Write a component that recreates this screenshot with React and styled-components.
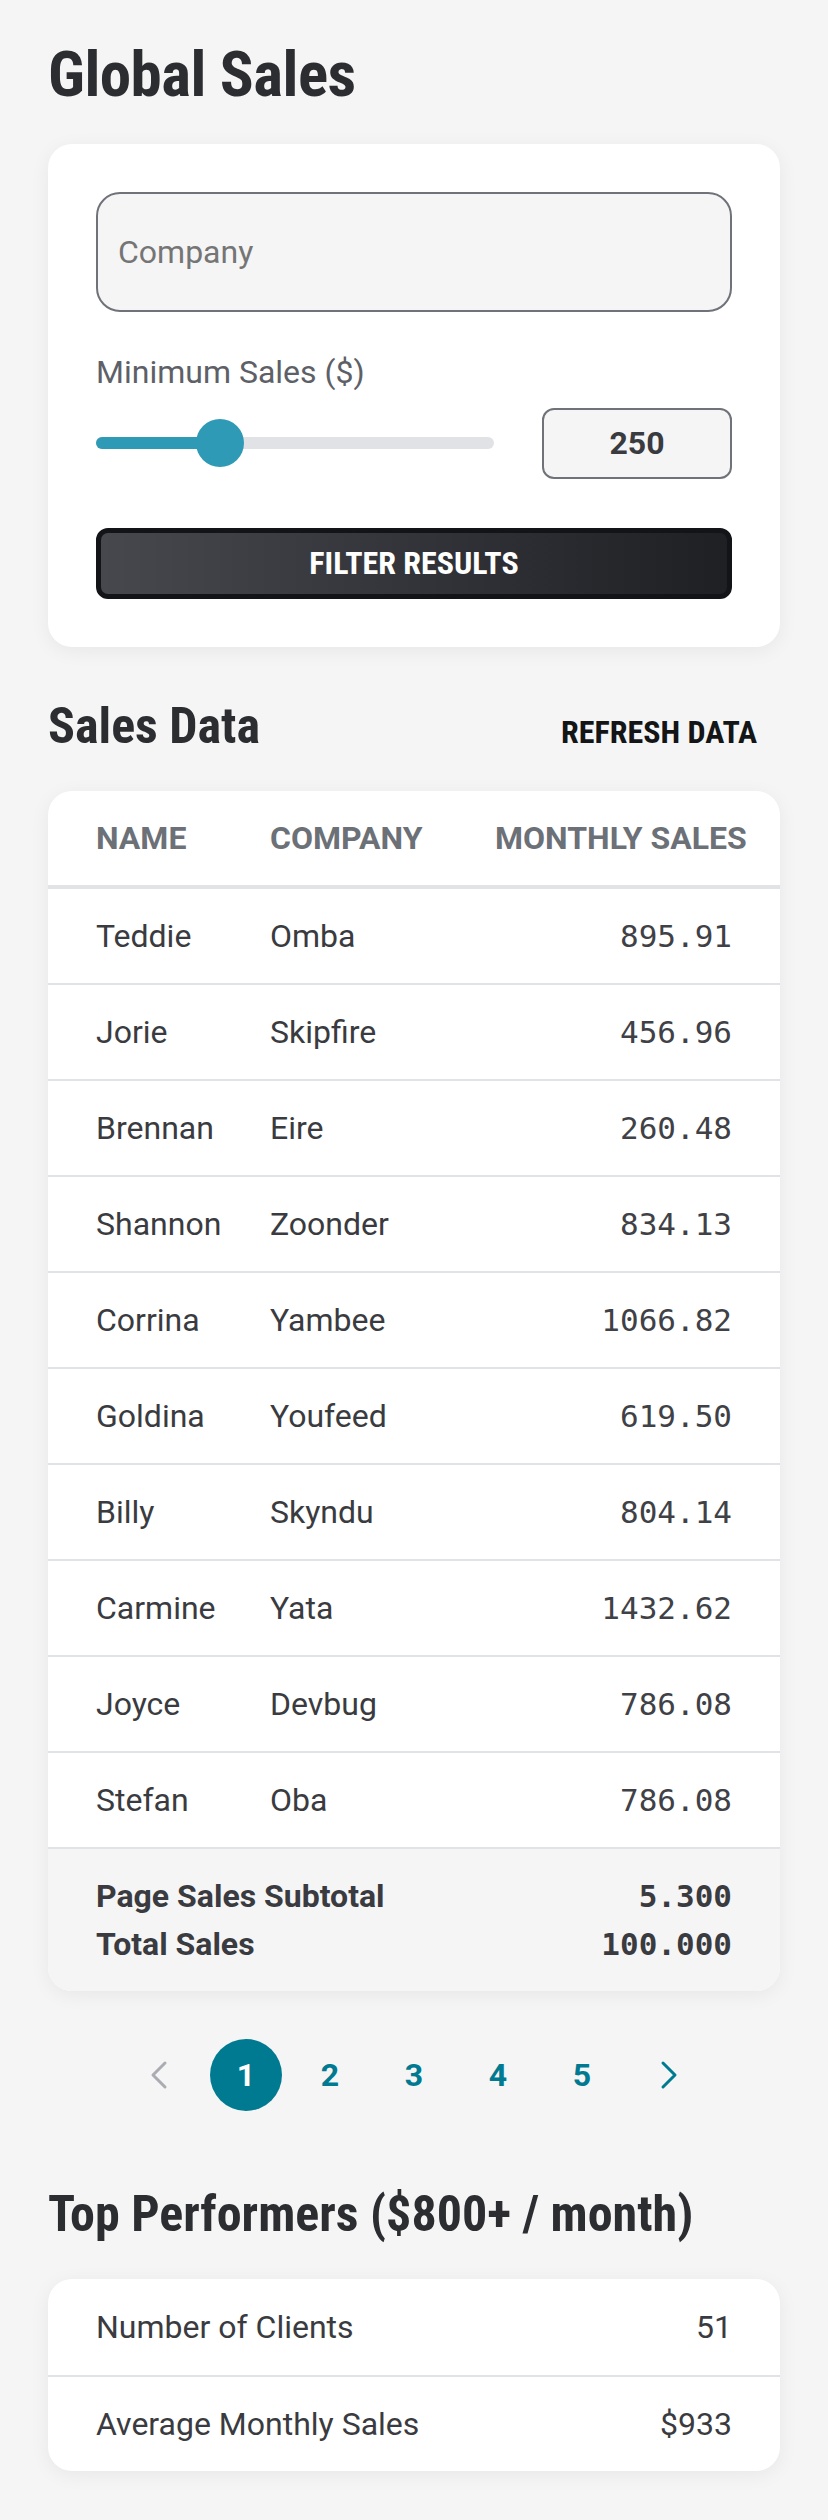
import React from 'react'
import styled, { createGlobalStyle } from 'styled-components'
import { ChevronLeft, ChevronRight } from 'lucide-react'

const GlobalStyle = createGlobalStyle`
  body {
    margin: 0;
    background: #f5f5f5;
    font-family: 'Roboto', 'Liberation Sans', sans-serif;
  }
  * { box-sizing: border-box; }
`

const condensed = `'Roboto Condensed', 'DejaVu Sans Condensed', 'Roboto', sans-serif`
const mono = `'DejaVu Sans Mono', 'Liberation Mono', monospace`

const Page = styled.div`
  padding: 37px 48px 48px;
  display: flex;
  flex-direction: column;
`

const Title = styled.h1`
  margin: 0 0 30px;
  font-family: ${condensed};
  font-weight: 700;
  font-size: 63px;
  line-height: 76.8px;
  letter-spacing: -0.5px;
  color: #2c2d31;
`

const Card = styled.div`
  background: #ffffff;
  border-radius: 24px;
  box-shadow: 0 4px 20px rgba(0, 0, 0, 0.06);
  overflow: hidden;
`

const FilterCard = styled(Card)`
  padding: 48px;
  display: flex;
  flex-direction: column;
`

const TextInput = styled.input`
  height: 120px;
  width: 100%;
  border: 2px solid #6f7278;
  border-radius: 24px;
  background: #f5f5f5;
  padding: 0 20px;
  font-family: 'Roboto', sans-serif;
  font-size: 32px;
  color: #3a3b40;
  outline: none;
  ::placeholder {
    color: #5d6067;
  }
`

const Label = styled.label`
  margin-top: 39px;
  font-size: 32px;
  line-height: 42px;
  color: #5d6067;
`

const SliderRow = styled.div`
  margin-top: 15px;
  display: flex;
  align-items: center;
  gap: 48px;
`

const Track = styled.div`
  position: relative;
  flex: 1;
  height: 12px;
  border-radius: 6px;
  background: #e1e2e6;
`

const Fill = styled.div`
  position: absolute;
  left: 0;
  top: 0;
  bottom: 0;
  border-radius: 6px;
  background: #2f9ab5;
`

const Thumb = styled.div`
  position: absolute;
  top: 50%;
  width: 48px;
  height: 48px;
  border-radius: 50%;
  background: #2f9ab5;
  transform: translate(-50%, -50%);
`

const NumberBox = styled.div`
  width: 190px;
  height: 71px;
  border: 2px solid #6f7278;
  border-radius: 12px;
  background: #f5f5f5;
  display: flex;
  align-items: center;
  justify-content: center;
  font-weight: 700;
  font-size: 32px;
  color: #3a3b40;
`

const FilterButton = styled.button`
  margin-top: 49px;
  height: 71px;
  border: 5px solid #131417;
  border-radius: 12px;
  background: linear-gradient(90deg, #47484e, #1f2024);
  color: #ffffff;
  font-family: ${condensed};
  font-weight: 700;
  font-size: 32px;
  cursor: pointer;
`

const SectionHead = styled.div`
  margin-top: 51px;
  display: flex;
  justify-content: space-between;
  align-items: baseline;
`

const SectionTitle = styled.h2`
  margin: 0;
  font-family: ${condensed};
  font-weight: 700;
  font-size: 50px;
  line-height: 57.6px;
  color: #2c2d31;
`

const RefreshButton = styled.button`
  background: none;
  border: none;
  padding: 0 23px 0 0;
  font-family: ${condensed};
  font-weight: 700;
  font-size: 32px;
  color: #141517;
  cursor: pointer;
`

const TableCard = styled(Card)`
  margin-top: 36px;
`

const Row = styled.div`
  display: grid;
  grid-template-columns: 174px 225px 1fr;
  align-items: center;
  padding: 0 24px;
  height: ${p => (p.head ? '98px' : '96px')};
  border-bottom: ${p => (p.head ? '4px' : '2px')} solid #e2e3e7;
`

const HeadCell = styled.div`
  padding: 0 24px;
  font-weight: 700;
  font-size: 32px;
  color: #6c7077;
  white-space: nowrap;
`

const Cell = styled.div`
  padding: 0 24px;
  font-size: 32px;
  color: #3a3b40;
`

const NumCell = styled(Cell)`
  text-align: right;
  font-family: ${mono};
  font-size: 31px;
  color: #404146;
`

const Footer = styled.div`
  background: #f5f5f5;
  padding: 23px 48px;
  display: grid;
  grid-template-columns: 1fr auto;
  line-height: 48px;
  color: #3a3b40;
`

const FootLabel = styled.div`
  font-weight: 700;
  font-size: 32px;
`

const FootValue = styled.div`
  text-align: right;
  font-family: ${mono};
  font-weight: 700;
  font-size: 31px;
`

const Pagination = styled.div`
  margin-top: 48px;
  display: flex;
  justify-content: center;
  gap: 12px;
`

const PageItem = styled.button`
  width: 72px;
  height: 72px;
  margin: 0 ${p => (p.arrow ? '3px' : '0')};
  border: none;
  border-radius: 50%;
  padding: 0;
  display: flex;
  align-items: center;
  justify-content: center;
  background: ${p => (p.active ? '#007a91' : 'transparent')};
  color: ${p => (p.active ? '#ffffff' : p.muted ? '#a9acb1' : '#007a91')};
  font-family: 'Roboto', sans-serif;
  font-weight: 700;
  font-size: 32px;
  cursor: pointer;
`

const TopTitle = styled(SectionTitle)`
  margin-top: 75px;
`

const SummaryCard = styled(Card)`
  margin-top: 35px;
`

const SummaryRow = styled.div`
  display: flex;
  justify-content: space-between;
  align-items: center;
  height: 96px;
  padding: 0 48px;
  font-size: 32px;
  color: #3a3b40;
  & + & {
    border-top: 2px solid #e2e3e7;
  }
`

const rows = [
  ['Teddie', 'Omba', '895.91'],
  ['Jorie', 'Skipfire', '456.96'],
  ['Brennan', 'Eire', '260.48'],
  ['Shannon', 'Zoonder', '834.13'],
  ['Corrina', 'Yambee', '1066.82'],
  ['Goldina', 'Youfeed', '619.50'],
  ['Billy', 'Skyndu', '804.14'],
  ['Carmine', 'Yata', '1432.62'],
  ['Joyce', 'Devbug', '786.08'],
  ['Stefan', 'Oba', '786.08'],
]

const minSales = 250
const maxSales = 800

const App = () => {
  const pct = (minSales / maxSales) * 100

  return (
    <>
      <GlobalStyle />
      <Page>
        <Title>Global Sales</Title>

        <FilterCard>
          <TextInput type="text" placeholder="Company" />
          <Label>Minimum Sales ($)</Label>
          <SliderRow>
            <Track>
              <Fill style={{ width: `${pct}%` }} />
              <Thumb style={{ left: `${pct}%` }} />
            </Track>
            <NumberBox>{minSales}</NumberBox>
          </SliderRow>
          <FilterButton>FILTER RESULTS</FilterButton>
        </FilterCard>

        <SectionHead>
          <SectionTitle>Sales Data</SectionTitle>
          <RefreshButton>REFRESH DATA</RefreshButton>
        </SectionHead>

        <TableCard>
          <Row head>
            <HeadCell>NAME</HeadCell>
            <HeadCell>COMPANY</HeadCell>
            <HeadCell>MONTHLY SALES</HeadCell>
          </Row>
          {rows.map(([name, company, sales]) => (
            <Row key={name}>
              <Cell>{name}</Cell>
              <Cell>{company}</Cell>
              <NumCell>{sales}</NumCell>
            </Row>
          ))}
          <Footer>
            <FootLabel>Page Sales Subtotal</FootLabel>
            <FootValue>5.300</FootValue>
            <FootLabel>Total Sales</FootLabel>
            <FootValue>100.000</FootValue>
          </Footer>
        </TableCard>

        <Pagination>
          <PageItem arrow muted><ChevronLeft size={48} strokeWidth={1.5} /></PageItem>
          <PageItem active>1</PageItem>
          <PageItem>2</PageItem>
          <PageItem>3</PageItem>
          <PageItem>4</PageItem>
          <PageItem>5</PageItem>
          <PageItem arrow><ChevronRight size={48} strokeWidth={1.5} /></PageItem>
        </Pagination>

        <TopTitle>Top Performers ($800+ / month)</TopTitle>

        <SummaryCard>
          <SummaryRow>
            <span>Number of Clients</span>
            <span>51</span>
          </SummaryRow>
          <SummaryRow>
            <span>Average Monthly Sales</span>
            <span>$933</span>
          </SummaryRow>
        </SummaryCard>
      </Page>
    </>
  )
}

export default App
